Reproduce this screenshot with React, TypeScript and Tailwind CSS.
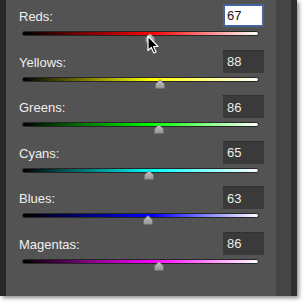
import React from "react";

type Row = { label: string; value: number; color: string; active?: boolean };

const rows: Row[] = [
  { label: "Reds:", value: 67, color: "#ff0000", active: true },
  { label: "Yellows:", value: 88, color: "#ffff00" },
  { label: "Greens:", value: 86, color: "#00ff00" },
  { label: "Cyans:", value: 65, color: "#00ffff" },
  { label: "Blues:", value: 63, color: "#0000ff" },
  { label: "Magentas:", value: 86, color: "#ff00ff" },
];

const TRACK_W = 237;

function Thumb({ value }: { value: number }) {
  const frac = (value + 200) / 500;
  const left = frac * TRACK_W + 1.5 - 5;
  return (
    <svg
      className="absolute top-[2px]"
      style={{ left }}
      width="10"
      height="10"
      viewBox="0 0 10 10"
    >
      <defs>
        <linearGradient id="tg" x1="0" y1="0" x2="0" y2="1">
          <stop offset="0" stopColor="#c4c4c4" />
          <stop offset="1" stopColor="#939393" />
        </linearGradient>
      </defs>
      <polygon points="5,0.5 9.5,5 9.5,9.5 0.5,9.5 0.5,5" fill="url(#tg)" stroke="#6a6a6a" strokeWidth="0.6" />
    </svg>
  );
}

function SliderRow({ row }: { row: Row }) {
  return (
    <div className="h-[45.6px] shrink-0">
      <div className="flex h-[23px] items-center">
        <span className="pl-[13px] pt-[2px] text-[13px] leading-none text-[#efefef]">{row.label}</span>
        {row.active ? (
          <div className="ml-auto mr-[12px] box-border flex h-[23px] w-[41px] items-center border-2 border-[#46659c] bg-white pl-[2px] text-[13px] leading-none text-[#151515]">
            {row.value}
          </div>
        ) : (
          <div className="ml-auto mr-[12px] box-border flex h-[23px] w-[41px] items-center border-t border-dotted border-t-[#2a2a2a] bg-[#3a3a3a] pl-[4px] text-[13px] leading-none text-[#ececec]">
            {row.value}
          </div>
        )}
      </div>
      <div className="relative ml-[16px] mt-[4px] h-[5px] w-[237px]">
        <div
          className="h-[5px] w-full rounded-full border border-[#262626]"
          style={{
            background: `linear-gradient(to right, #000000 0%, ${row.color} 55%, #ffffff 100%)`,
          }}
        />
        <Thumb value={row.value} />
      </div>
    </div>
  );
}

export default function App() {
  return (
    <div
      className="relative h-[305px] w-[304px] overflow-hidden bg-white"
      style={{ fontFamily: '"Liberation Sans", Arial, sans-serif' }}
    >
      <div className="flex h-[296px] w-[297px] shadow-[2px_2px_4px_rgba(0,0,0,0.45)]">
        <div className="w-[6px] bg-[#282828]" />
        <div className="flex w-[270px] flex-col bg-[#535353] pt-[4px]">
          {rows.map((r) => (
            <SliderRow key={r.label} row={r} />
          ))}
        </div>
        <div className="w-[15px] bg-[#454545]" />
        <div className="w-[6px] bg-[#2e2e2e]" />
      </div>
      <svg
        className="absolute left-[147px] top-[35px]"
        width="13"
        height="19"
        viewBox="0 0 13 19"
      >
        <path
          d="M1,1 L1,15.5 L4.3,12.4 L6.8,18 L9,17 L6.6,11.5 L11,11.5 Z"
          fill="#000"
          stroke="#fff"
          strokeWidth="1.2"
          strokeLinejoin="round"
        />
      </svg>
    </div>
  );
}
